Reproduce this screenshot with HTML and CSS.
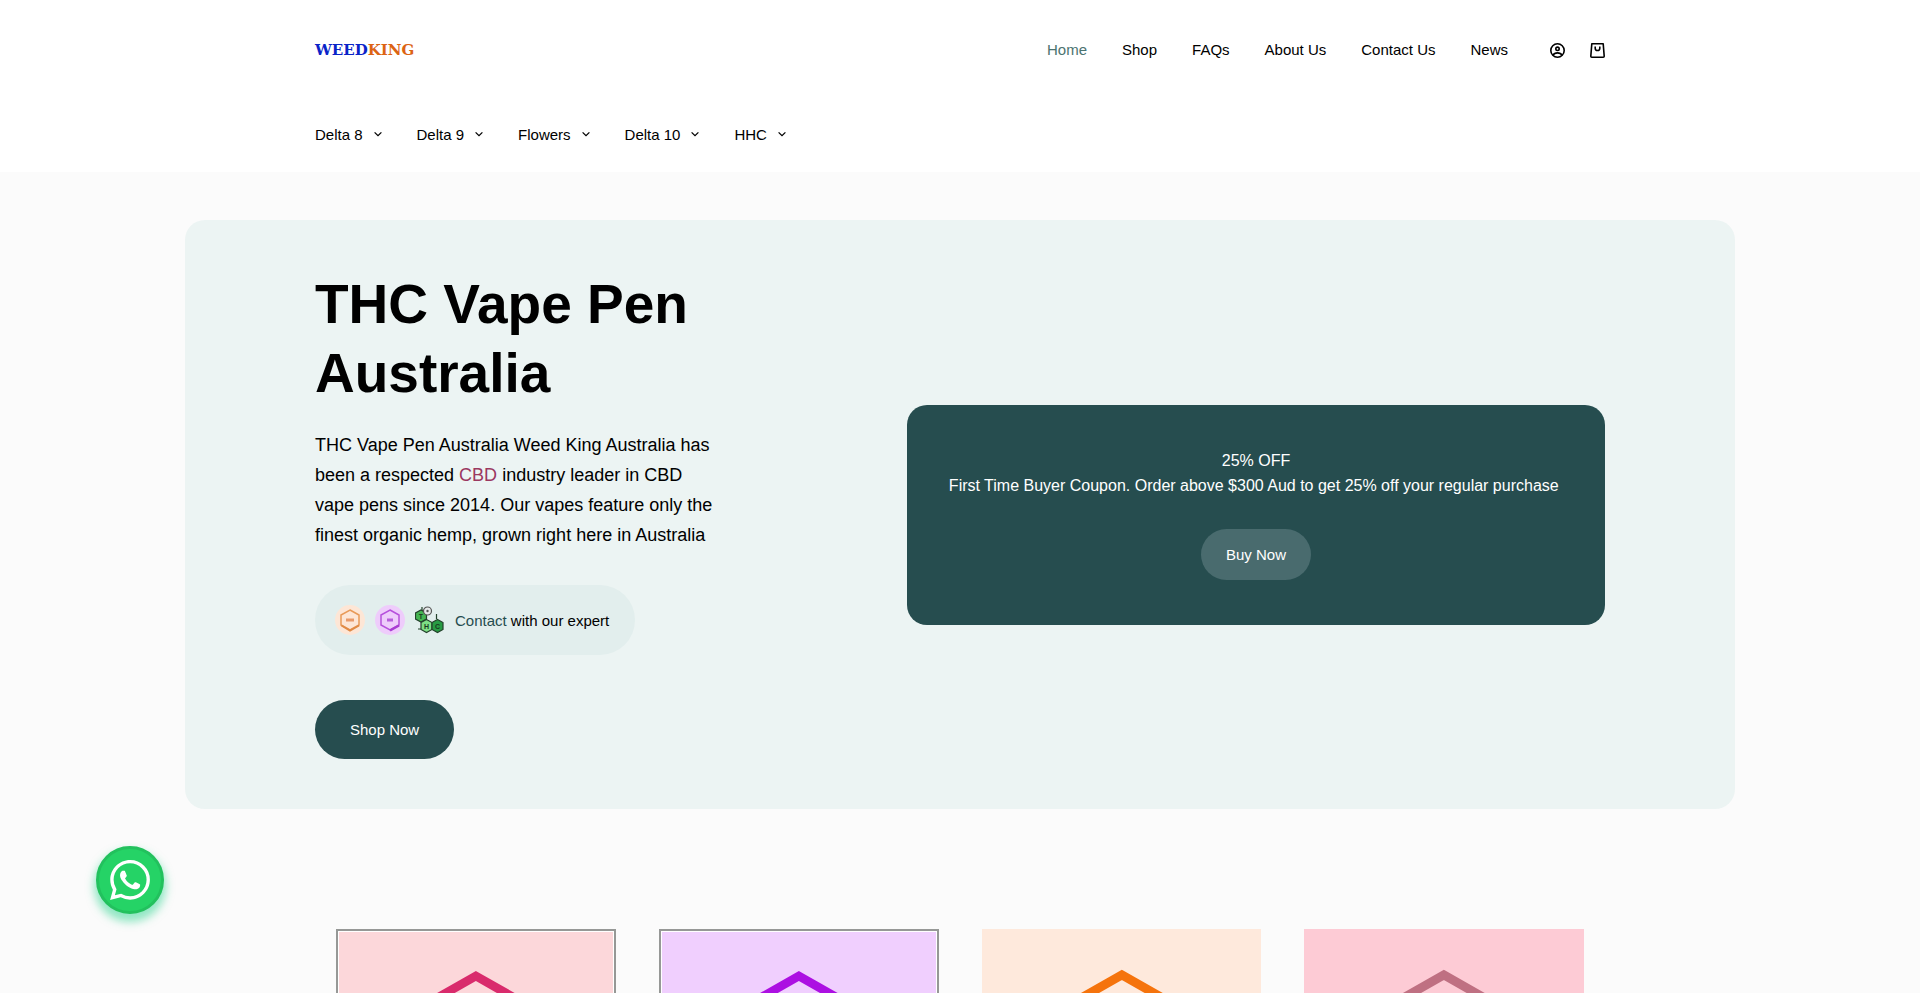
FILE: index.html
```
<!DOCTYPE html>
<html lang="en">
<head>
    <meta charset="UTF-8">
    <meta name="viewport" content="width=device-width, initial-scale=1.0">
    <title>Weed King</title>
    <link rel="stylesheet" href="styles.css">
</head>
<body>

<header class="site-header">
    <div class="container top-row">
        <a class="logo" href="#"><span class="logo-weed">WEED</span><span class="logo-king">KING</span></a>
        <div class="top-right">
            <nav class="main-nav">
                <a class="active" href="#">Home</a>
                <a href="#">Shop</a>
                <a href="#">FAQs</a>
                <a href="#">About Us</a>
                <a href="#">Contact Us</a>
                <a href="#">News</a>
            </nav>
            <div class="header-icons">
                <a href="#" aria-label="Account">
                    <svg width="15" height="15" viewBox="0 0 15 15" fill="none" stroke="#000" stroke-width="1.6">
                        <circle cx="7.5" cy="7.5" r="6.7"/>
                        <circle cx="7.5" cy="5.8" r="1.7"/>
                        <path d="M3 12.2c.9-1.6 2.5-2.3 4.5-2.3s3.6.7 4.5 2.3"/>
                    </svg>
                </a>
                <a href="#" aria-label="Cart">
                    <svg width="15" height="15" viewBox="0 0 15 15" fill="none" stroke="#000" stroke-width="1.6" stroke-linejoin="round">
                        <path d="M1.8.8h11.4l1 12.4a1 1 0 0 1-1 1H1.8a1 1 0 0 1-1-1z"/>
                        <path d="M5.2 3.6v1.6a2.3 2.3 0 0 0 4.6 0V3.6"/>
                    </svg>
                </a>
            </div>
        </div>
    </div>
    <nav class="container category-nav">
        <a href="#">Delta 8 <svg class="arrow" viewBox="0 0 8 8"><path d="M.6 2.4 4 5.6l3.4-3.2"/></svg></a>
        <a href="#">Delta 9 <svg class="arrow" viewBox="0 0 8 8"><path d="M.6 2.4 4 5.6l3.4-3.2"/></svg></a>
        <a href="#">Flowers <svg class="arrow" viewBox="0 0 8 8"><path d="M.6 2.4 4 5.6l3.4-3.2"/></svg></a>
        <a href="#">Delta 10 <svg class="arrow" viewBox="0 0 8 8"><path d="M.6 2.4 4 5.6l3.4-3.2"/></svg></a>
        <a href="#">HHC <svg class="arrow" viewBox="0 0 8 8"><path d="M.6 2.4 4 5.6l3.4-3.2"/></svg></a>
    </nav>
</header>

<main>
    <section class="hero">
        <div class="container hero-inner">
            <div class="hero-text">
                <h1>THC Vape Pen Australia</h1>
                <p>THC Vape Pen Australia Weed King Australia has been a respected <a class="cbd-link" href="#">CBD</a> industry leader in CBD vape pens since 2014. Our vapes feature only the finest organic hemp, grown right here in Australia</p>
                <div class="expert">
                    <svg width="30" height="30" viewBox="0 0 30 30">
                        <circle cx="15" cy="15" r="15" fill="#fde6d6"/>
                        <path d="M15 5l9 5v10l-9 5-9-5V10z" fill="none" stroke="#e89a58" stroke-width="1.5"/>
                        <path d="M6.5 20.5 15 25.5l9-5" fill="none" stroke="#e08a45" stroke-width="2"/>
                        <path d="M11 15h8" stroke="#e89a6a" stroke-width="3"/>
                    </svg>
                    <svg width="30" height="30" viewBox="0 0 30 30">
                        <circle cx="15" cy="15" r="15" fill="#eeccfb"/>
                        <path d="M15 5l9 5v10l-9 5-9-5V10z" fill="none" stroke="#b650dc" stroke-width="1.5"/>
                        <path d="M15 25.5l9-5" fill="none" stroke="#a83cd2" stroke-width="2.5"/>
                        <path d="M12 15h6" stroke="#b75edb" stroke-width="3"/>
                    </svg>
                    <svg width="30" height="30" viewBox="0 0 30 30">
                        <g stroke="#23412b" stroke-width="1.2">
                            <path d="M7 2v4M21.5 14V9M3 24h5M8 20l3 3" fill="none"/>
                            <path d="M6 5l5.5 3v6L6 17 .5 14V8z" fill="#45b552"/>
                            <path d="M11.500 14.500l5.500 3v7l-5.500 3-5.500-3v-7z" fill="#7ddf85"/>
                            <path d="M22.500 14.500l5.500 3v7l-5.500 3-5.500-3v-7z" fill="#279b43"/>
                            <circle cx="12.5" cy="6" r="4" fill="#e5e9e9" stroke="#555"/>
                            <circle cx="12.5" cy="6" r="1.2" fill="#555" stroke="none"/>
                        </g>
                        <g class="molecule-text">
                            <text x="6" y="14">T</text>
                            <text x="11.5" y="24">H</text>
                            <text x="22.5" y="24">C</text>
                        </g>
                    </svg>
                    <span class="expert-label"><a href="#">Contact</a> with our expert</span>
                </div>
                <a class="btn shop-btn" href="#">Shop Now</a>
            </div>
            <div class="coupon">
                <p>25% OFF<br>First Time Buyer Coupon. Order above $300 Aud to get 25% off your regular purchase&nbsp;</p>
                <a class="btn buy-btn" href="#">Buy Now</a>
            </div>
        </div>
    </section>

    <section class="container products">
        <a class="product delta8 framed" href="#" aria-label="Delta 8">
            <svg viewBox="0 0 280 280"><path d="M140 45l81 46v94l-81 47-81-47V91z"/></svg>
        </a>
        <a class="product delta9 framed" href="#" aria-label="Delta 9">
            <svg viewBox="0 0 280 280"><path d="M140 45l81 46v94l-81 47-81-47V91z"/></svg>
        </a>
        <a class="product delta10" href="#" aria-label="Delta 10">
            <svg viewBox="0 0 280 280"><path d="M140 46l81 46v94l-81 47-81-47V92z"/></svg>
        </a>
        <a class="product hhc" href="#" aria-label="HHC">
            <svg viewBox="0 0 280 280"><path d="M140 46l81 46v94l-81 47-81-47V92z"/></svg>
        </a>
    </section>
</main>

<a class="whatsapp" href="#" aria-label="WhatsApp">
    <svg width="40" height="40" viewBox="0 0 24 24" fill="#fff">
        <path d="M17.472 14.382c-.297-.149-1.758-.867-2.030-.967-.273-.099-.471-.148-.670.150-.197.297-.767.966-.940 1.164-.173.199-.347.223-.644.075-.297-.150-1.255-.463-2.390-1.475-.883-.788-1.480-1.761-1.653-2.059-.173-.297-.018-.458.130-.606.134-.133.298-.347.446-.520.149-.174.198-.298.298-.497.099-.198.050-.371-.025-.520-.075-.149-.669-1.612-.916-2.207-.242-.579-.487-.500-.669-.510-.173-.008-.371-.010-.570-.010-.198 0-.520.074-.792.372-.272.297-1.040 1.016-1.040 2.479 0 1.462 1.065 2.875 1.213 3.074.149.198 2.096 3.200 5.077 4.487.709.306 1.262.489 1.694.625.712.227 1.360.195 1.871.118.571-.085 1.758-.719 2.006-1.413.248-.694.248-1.289.173-1.413-.074-.124-.272-.198-.570-.347m-5.421 7.403h-.004a9.870 9.870 0 0 1-5.031-1.378l-.361-.214-3.741.982.998-3.648-.235-.374a9.860 9.860 0 0 1-1.510-5.260c.001-5.450 4.436-9.884 9.888-9.884 2.640 0 5.122 1.030 6.988 2.898a9.825 9.825 0 0 1 2.893 6.994c-.003 5.450-4.437 9.884-9.885 9.884m8.413-18.297A11.815 11.815 0 0 0 12.050 0C5.495 0 .160 5.335.157 11.892c0 2.096.547 4.142 1.588 5.945L.057 24l6.305-1.654a11.882 11.882 0 0 0 5.683 1.448h.005c6.554 0 11.890-5.335 11.893-11.893a11.821 11.821 0 0 0-3.480-8.413z"/>
    </svg>
</a>

</body>
</html>
```

FILE: styles.css
```
* {
    box-sizing: border-box;
}

body {
    margin: 0;
    font-family: "Liberation Sans", Arial, sans-serif;
    font-size: 15px;
    color: #000;
    background-color: #fbfbfb;
    overflow-x: hidden;
}

a {
    color: inherit;
    text-decoration: none;
}

.container {
    width: 100%;
    max-width: 1290px;
    margin: 0 auto;
}

/* header */
.site-header {
    background-color: #fff;
    padding-bottom: 2px;
}

.top-row {
    height: 100px;
    display: flex;
    align-items: center;
    justify-content: space-between;
}

.logo {
    font-family: "DejaVu Serif", serif;
    font-size: 15px;
    font-weight: bold;
}

.logo-weed {
    color: #0a24c8;
}

.logo-king {
    color: #dc6413;
}

.top-right, .main-nav, .header-icons, .category-nav, .category-nav a {
    display: flex;
    align-items: center;
}

.top-right {
    gap: 42px;
}

.main-nav {
    gap: 35px;
    padding-bottom: 2px;
}

.main-nav .active {
    color: #4b7370;
}

.header-icons {
    gap: 25px;
}

.header-icons svg {
    display: block;
}

.category-nav {
    height: 70px;
    padding-bottom: 2px;
    gap: 35px;
}

.category-nav a {
    gap: 11px;
}

.arrow {
    width: 8px;
    height: 8px;
    fill: none;
    stroke: #000;
    stroke-width: 1.3;
}

/* hero */
.hero {
    max-width: 1550px;
    margin: 48px auto 120px;
    padding: 50px 0;
    background-color: #ecf4f3;
    border-radius: 20px;
}

.hero-inner {
    display: flex;
    align-items: center;
    justify-content: space-between;
}

.hero-text {
    width: 410px;
}

h1 {
    margin: 0 0 22px;
    font-size: 55px;
    line-height: 69px;
}

.hero-text p {
    margin: 0 0 35px;
    font-size: 18px;
    line-height: 30px;
}

.cbd-link {
    color: #9b3860;
}

.expert {
    width: fit-content;
    height: 70px;
    margin-bottom: 45px;
    padding: 0 26px 0 20px;
    display: flex;
    align-items: center;
    gap: 10px;
    background-color: #e2eeed;
    border-radius: 35px;
}

.expert-label a {
    color: #264d4f;
}

.molecule-text {
    font-size: 7px;
    font-weight: bold;
    text-anchor: middle;
    fill: #173a20;
}

.btn {
    display: inline-block;
    color: #fff;
    border-radius: 30px;
}

.shop-btn {
    display: block;
    width: fit-content;
    padding: 0 35px;
    line-height: 59px;
    background-color: #264d4f;
}

.coupon {
    width: 698px;
    padding: 43px 40px 45px;
    text-align: center;
    color: #fff;
    background-color: #264d4f;
    border-radius: 20px;
}

.coupon p {
    margin: 0 0 31px;
    font-size: 16px;
    line-height: 25px;
}

.buy-btn {
    padding: 0 25px;
    line-height: 51px;
    background-color: #496b6e;
}

/* products */
.products {
    display: grid;
    grid-template-columns: repeat(4, 1fr);
    gap: 43px;
    padding: 0 21px;
}

.product svg {
    display: block;
    width: 100%;
    fill: none;
    stroke-width: 9px;
}

.framed {
    border: 2px solid #969896;
    padding: 1px;
    background-color: #fff;
}

.delta8 svg {
    background-color: #fcd7da;
    stroke: #d92b6c;
}

.delta9 svg {
    background-color: #f0cffe;
    stroke: #ac10e2;
}

.delta10 svg {
    background-color: #fee9dc;
    stroke: #f5730c;
}

.hhc svg {
    background-color: #fdcbd5;
    stroke: #bf7082;
}

/* floating chat button */
.whatsapp {
    position: fixed;
    left: 96px;
    bottom: 79px;
    width: 68px;
    height: 68px;
    display: flex;
    align-items: center;
    justify-content: center;
    background-color: #25d366;
    border: 3px solid #22c15d;
    border-radius: 50%;
    box-shadow: 0 6px 8px 2px rgba(37, 211, 140, 0.5);
}
```
